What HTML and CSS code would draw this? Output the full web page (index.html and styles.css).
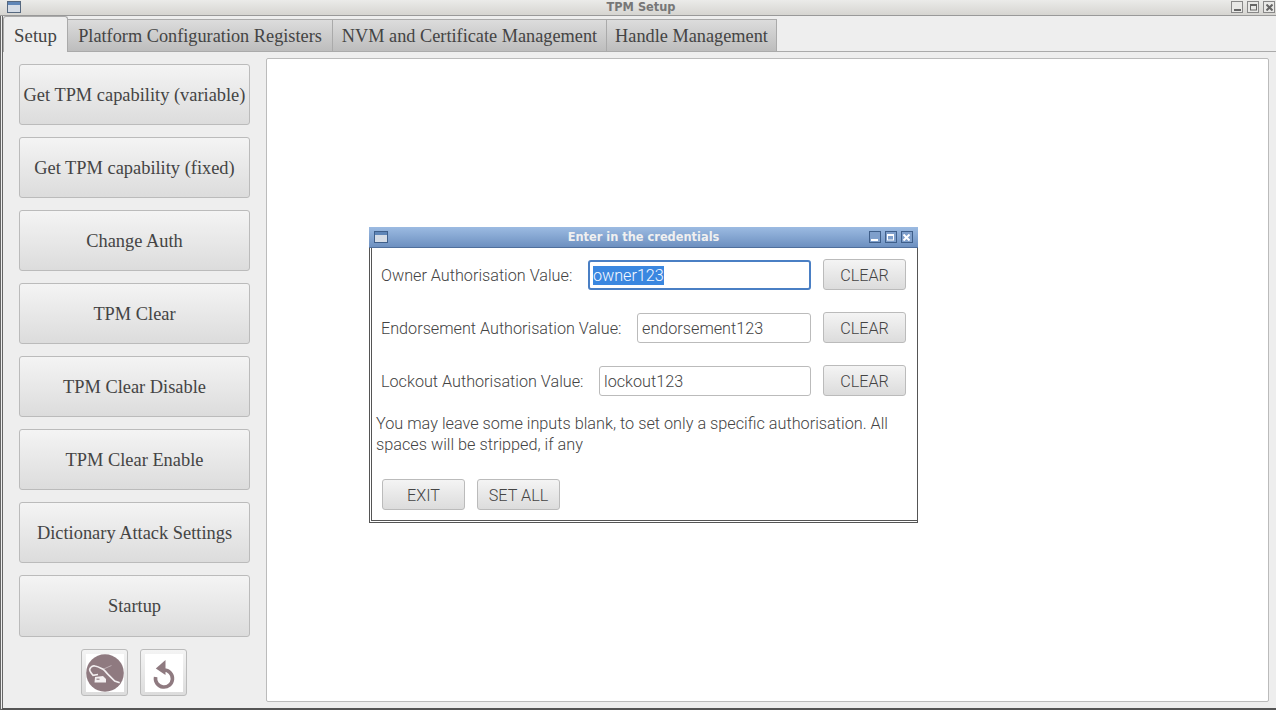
FILE: index.html
```html
<!DOCTYPE html>
<html lang="en">
<head>
    <meta charset="UTF-8">
    <meta name="viewport" content="width=device-width, initial-scale=1.0">
    <title>TPM Setup</title>
    <link rel="stylesheet" href="styles.css">
</head>
<body>
    <div class="window">
        <div class="titlebar">
            <svg class="win-icon" width="14" height="12" viewBox="0 0 14 12">
                <rect x="0.5" y="0.5" width="13" height="11" fill="#d5dce6" stroke="#56687f"/>
                <rect x="1" y="1" width="12" height="3" fill="#5f86b8"/>
            </svg>
            <span class="title">TPM Setup</span>
            <div class="win-buttons">
                <span class="win-btn"><svg width="7" height="7" viewBox="0 0 7 7"><rect x="0" y="5" width="7" height="2" fill="#666"/></svg></span>
                <span class="win-btn"><svg width="7" height="7" viewBox="0 0 7 7"><rect x="0.5" y="1" width="6" height="5" fill="none" stroke="#666"/><rect x="0" y="0" width="7" height="2" fill="#666"/></svg></span>
                <span class="win-btn"><svg width="7" height="7" viewBox="0 0 7 7"><path d="M0.5 0.5L6.5 6.5M6.5 0.5L0.5 6.5" stroke="#666" stroke-width="2"/></svg></span>
            </div>
        </div>

        <div class="tabs">
            <div class="tab active">Setup</div>
            <div class="tab tab-pcr">Platform Configuration Registers</div>
            <div class="tab tab-nvm">NVM and Certificate Management</div>
            <div class="tab tab-handle">Handle Management</div>
        </div>

        <div class="main">
            <div class="sidebar">
                <button class="side-btn">Get TPM capability (variable)</button>
                <button class="side-btn">Get TPM capability (fixed)</button>
                <button class="side-btn">Change Auth</button>
                <button class="side-btn">TPM Clear</button>
                <button class="side-btn">TPM Clear Disable</button>
                <button class="side-btn">TPM Clear Enable</button>
                <button class="side-btn">Dictionary Attack Settings</button>
                <button class="side-btn">Startup</button>
                <div class="icon-row">
                    <button class="icon-btn">
                        <svg width="38" height="38" viewBox="0 0 38 38">
                            <rect width="38" height="38" fill="#fff"/>
                            <circle cx="19" cy="19" r="18.8" fill="#8f7a80"/>
                            <path d="M17 15.3L25.5 11.5" fill="none" stroke="#bdaeb3" stroke-width="1"/>
                            <path d="M12 20.5L7 21.3C5 19 3.5 17 3.7 15.3C4.5 12.5 7 11.5 9 12C12 12.5 14.5 14 17 15.3C19 16.5 20.5 19 22 20.3L28.7 27L33.7 28.7" fill="none" stroke="#f3eff0" stroke-width="1.7"/>
                            <path d="M9 23L17 22L20 25V28.5H8.5Z" fill="#f3eff0"/>
                            <rect x="10.5" y="24.5" width="3" height="1.5" fill="#a8999e"/>
                        </svg>
                    </button>
                    <button class="icon-btn">
                        <svg width="38" height="38" viewBox="0 0 38 38">
                            <rect width="38" height="38" fill="#fff"/>
                            <path d="M19 16A8.5 8.5 0 1 1 10.6 23" fill="none" stroke="#8f7a80" stroke-width="3.6"/>
                            <path d="M20.5 6V21L10.8 14.5Z" fill="#8f7a80"/>
                        </svg>
                    </button>
                </div>
            </div>
            <div class="panel"></div>
        </div>

        <div class="dialog">
            <div class="dialog-title">
                <svg class="win-icon" width="14" height="12" viewBox="0 0 14 12">
                    <rect x="0.5" y="0.5" width="13" height="11" fill="#d5dce6" stroke="#3f5f8a"/>
                    <rect x="1" y="1" width="12" height="3" fill="#5f86b8"/>
                </svg>
                <span class="title">Enter in the credentials</span>
                <div class="win-buttons">
                    <span class="win-btn blue"><svg width="7" height="7" viewBox="0 0 7 7"><rect x="0" y="5" width="7" height="2" fill="#fff"/></svg></span>
                    <span class="win-btn blue"><svg width="7" height="7" viewBox="0 0 7 7"><rect x="0.5" y="1" width="6" height="5" fill="none" stroke="#fff"/><rect x="0" y="0" width="7" height="2" fill="#fff"/></svg></span>
                    <span class="win-btn blue"><svg width="7" height="7" viewBox="0 0 7 7"><path d="M0.5 0.5L6.5 6.5M6.5 0.5L0.5 6.5" stroke="#fff" stroke-width="2"/></svg></span>
                </div>
            </div>
            <div class="dialog-body">
                <div class="field">
                    <label>Owner Authorisation Value:</label>
                    <div class="input focused"><span class="selected">owner123</span></div>
                    <button class="small-btn">CLEAR</button>
                </div>
                <div class="field">
                    <label>Endorsement Authorisation Value:</label>
                    <div class="input">endorsement123</div>
                    <button class="small-btn">CLEAR</button>
                </div>
                <div class="field last">
                    <label>Lockout Authorisation Value:</label>
                    <div class="input">lockout123</div>
                    <button class="small-btn">CLEAR</button>
                </div>
                <p class="note">You may leave some inputs blank, to set only a specific authorisation. All spaces will be stripped, if any</p>
                <div class="actions">
                    <button class="small-btn">EXIT</button>
                    <button class="small-btn">SET ALL</button>
                </div>
            </div>
        </div>
    </div>
</body>
</html>
```
FILE: styles.css
```css
* {
    box-sizing: border-box;
}

body {
    margin: 0;
    overflow: hidden;
    background-color: #fff;
    font-family: 'Liberation Serif', serif;
}

.window {
    position: relative;
    width: 1276px;
    height: 710px;
    display: flex;
    flex-direction: column;
    background-color: #eeeeee;
    border-left: 3px double #666;
    border-bottom: 2px solid #555;
}

.titlebar {
    height: 16px;
    margin-left: -3px;
    padding: 0 1px 1px 7px;
    display: flex;
    align-items: center;
    justify-content: space-between;
    background: linear-gradient(#ebebe9, #d6d5d1);
    border-bottom: 1px solid #999;
}

.win-icon {
    display: block;
    margin-right: 30px;
}

.title {
    font-family: 'DejaVu Sans', sans-serif;
    font-size: 11.4px;
    font-weight: bold;
    color: #777;
}

.win-buttons {
    display: flex;
    gap: 4px;
}

.win-btn {
    width: 12px;
    height: 12px;
    display: flex;
    align-items: center;
    justify-content: center;
    background-color: #e8e8e6;
    border: 1px solid #888;
}

.win-btn.blue {
    background-color: #7f9fcb;
    border-color: #3f5f8a;
}

.tabs {
    height: 36px;
    display: flex;
    align-items: flex-end;
    border-bottom: 1px solid #aaa;
}

.tab {
    height: 32px;
    padding-top: 2px;
    display: flex;
    align-items: center;
    justify-content: center;
    font-size: 18.3px;
    white-space: nowrap;
    color: #444;
    background: linear-gradient(#dcdcdc, #bdbdbd);
    border: 1px solid #aaa;
    border-bottom: none;
    border-left: none;
}

.tab.active {
    width: 65px;
    height: 36px;
    margin-bottom: -1px;
    font-size: 18.8px;
    background: #eeeeee;
    border-left: 1px solid #aaa;
    border-radius: 3px 3px 0 0;
}

.tab-pcr {
    width: 265px;
}

.tab-nvm {
    width: 274px;
}

.tab-handle {
    width: 170px;
}

.main {
    flex: 1;
    display: flex;
    padding: 6px 7px 6px 0;
    min-height: 0;
}

.sidebar {
    width: 263px;
    padding: 6px 16px 0;
    display: flex;
    flex-direction: column;
    gap: 12px;
}

.side-btn {
    height: 61px;
    padding: 2px 0 0;
    font-family: inherit;
    font-size: 18.4px;
    white-space: nowrap;
    color: #444;
    background: linear-gradient(#f4f4f4, #dcdcdc);
    border: 1px solid #bbb;
    border-radius: 3px;
}

.side-btn:last-of-type {
    height: 62px;
    padding: 0;
}

.icon-row {
    display: flex;
    justify-content: center;
    gap: 12px;
    margin-right: 1px;
}

.icon-btn {
    width: 47px;
    height: 47px;
    padding: 0;
    display: flex;
    align-items: center;
    justify-content: center;
    background: linear-gradient(#f4f4f4, #dcdcdc);
    border: 1px solid #bbb;
    border-radius: 3px;
}

.panel {
    flex: 1;
    background-color: #fff;
    border: 1px solid #bbb;
    border-radius: 2px;
}

.dialog {
    position: absolute;
    left: 366px;
    top: 227px;
    width: 549px;
    height: 296px;
    display: flex;
    flex-direction: column;
    background-color: #fff;
    border-left: 3px double #555;
    border-right: 1px solid #555;
    border-bottom: 3px double #555;
    font-family: Roboto, sans-serif;
    font-weight: 300;
    font-size: 16.2px;
    color: #444;
}

.dialog-title {
    height: 21px;
    margin: 0 -1px 0 -3px;
    padding: 0 5px 0 5px;
    display: flex;
    align-items: center;
    justify-content: space-between;
    background: linear-gradient(#9cbbe2, #6d90c0);
    border-bottom: 1px solid #4f6f9c;
}

.dialog-title .title {
    color: #f0f0f0;
}

.dialog-body {
    flex: 1;
    padding: 11px 11px 0 4px;
}

.field {
    height: 31px;
    margin-bottom: 22px;
    padding-left: 5px;
    display: flex;
    align-items: center;
}

.field.last {
    margin-bottom: 17px;
}

.field label {
    flex-shrink: 0;
    padding-top: 2px;
}

.input {
    flex: 1;
    height: 30px;
    margin: 0 12px 0 15.6px;
    padding: 0 4px;
    align-self: flex-end;
    display: flex;
    align-items: center;
    background-color: #fff;
    border: 1px solid #bbb;
    border-radius: 3px;
}

.input.focused {
    border: 2px solid #4a7fc4;
    padding: 1px 3px 0;
}

.selected {
    background-color: #3a87e0;
    color: #f4f8ff;
}

.small-btn {
    width: 83px;
    height: 31px;
    padding: 2px 0 0;
    font-family: inherit;
    font-weight: 300;
    font-size: 16.2px;
    color: #444;
    background: linear-gradient(#f4f4f4, #dcdcdc);
    border: 1px solid #bbb;
    border-radius: 3px;
}

.note {
    margin: 0;
    font-size: 16.25px;
    line-height: 21px;
}

.actions {
    display: flex;
    gap: 12px;
    margin-top: 24px;
    padding-left: 6px;
}
```
